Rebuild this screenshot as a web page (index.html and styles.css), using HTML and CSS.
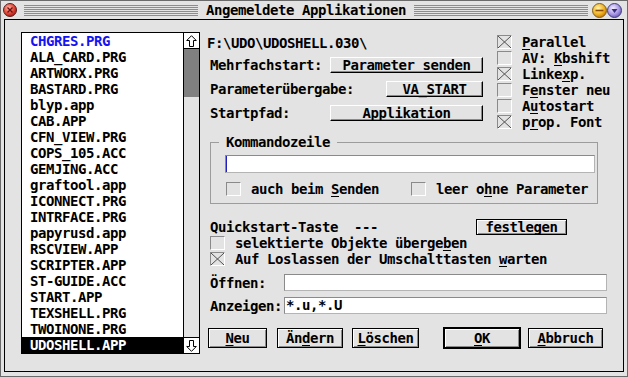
FILE: index.html
```html
<!DOCTYPE html>
<html lang="de">
<head>
<meta charset="utf-8">
<title>Angemeldete Applikationen</title>
<link rel="stylesheet" href="styles.css">
</head>
<body>
<div class="window">
  <div class="titlebar">
    <svg class="tb-close" width="14" height="14" viewBox="0 0 14 14">
      <defs><radialGradient id="gr" cx="0.4" cy="0.35" r="0.7"><stop offset="0" stop-color="#ffb8a8"/><stop offset="0.6" stop-color="#e04434"/><stop offset="1" stop-color="#a01414"/></radialGradient></defs>
      <circle cx="7" cy="7" r="6.5" fill="url(#gr)" stroke="#5a2020"/>
      <path d="M4.5 4.5L9.5 9.5M9.5 4.5L4.5 9.5" stroke="#6a1010" stroke-width="1.4"/>
    </svg>
    <div class="stripes s1"></div>
    <div class="title">Angemeldete Applikationen</div>
    <div class="stripes s2"></div>
    <svg class="tb-min" width="15" height="15" viewBox="0 0 15 15">
      <defs><radialGradient id="gy" cx="0.4" cy="0.35" r="0.7"><stop offset="0" stop-color="#fff6b0"/><stop offset="0.6" stop-color="#f2b222"/><stop offset="1" stop-color="#c07000"/></radialGradient></defs>
      <circle cx="7.5" cy="7.5" r="7" fill="url(#gy)" stroke="#806020"/>
      <path d="M3.5 7.5H11.5" stroke="#8a4a00" stroke-width="1.6"/>
    </svg>
    <svg class="tb-max" width="15" height="15" viewBox="0 0 15 15">
      <defs><radialGradient id="gp" cx="0.4" cy="0.35" r="0.7"><stop offset="0" stop-color="#f4eeff"/><stop offset="0.6" stop-color="#a898e4"/><stop offset="1" stop-color="#6454b4"/></radialGradient></defs>
      <circle cx="7.5" cy="7.5" r="7" fill="url(#gp)" stroke="#404078"/>
      <path d="M4.5 6H10.5L7.5 10Z" fill="#3a2c80"/>
    </svg>
  </div>
  <div class="content">
    <div class="listbox">
      <div class="items">
        <div class="item blue">CHGRES.PRG</div>
        <div class="item">ALA_CARD.PRG</div>
        <div class="item">ARTWORX.PRG</div>
        <div class="item">BASTARD.PRG</div>
        <div class="item">blyp.app</div>
        <div class="item">CAB.APP</div>
        <div class="item">CFN_VIEW.PRG</div>
        <div class="item">COPS_105.ACC</div>
        <div class="item">GEMJING.ACC</div>
        <div class="item">graftool.app</div>
        <div class="item">ICONNECT.PRG</div>
        <div class="item">INTRFACE.PRG</div>
        <div class="item">papyrusd.app</div>
        <div class="item">RSCVIEW.APP</div>
        <div class="item">SCRIPTER.APP</div>
        <div class="item">ST-GUIDE.ACC</div>
        <div class="item">START.APP</div>
        <div class="item">TEXSHELL.PRG</div>
        <div class="item">TWOINONE.PRG</div>
        <div class="item sel">UDOSHELL.APP</div>
      </div>
      <div class="scrollbar">
        <div class="arrow up"><svg width="11" height="12" viewBox="0 0 11 12"><path d="M5.5 0.7L10.3 5.5H7.5V11.5H3.5V5.5H0.7Z" fill="none" stroke="#000"/></svg></div>
        <div class="track"><div class="thumb"></div></div>
        <div class="arrow down"><svg width="11" height="12" viewBox="0 0 11 12"><path d="M5.5 11.3L10.3 6.5H7.5V0.5H3.5V6.5H0.7Z" fill="none" stroke="#000"/></svg></div>
      </div>
    </div>
    <div class="panel">
      <div class="top">
        <div class="fields">
          <div class="path">F:\UDO\UDOSHELL.030\</div>
          <div class="frow first"><span>Mehrfachstart:</span><span class="popup w153">Parameter senden</span></div>
          <div class="frow"><span>Parameterübergabe:</span><span class="popup w97">VA_START</span></div>
          <div class="frow"><span>Startpfad:</span><span class="popup w153">Applikation</span></div>
        </div>
        <div class="checks">
          <div class="chk"><span class="box x"></span><span><u>P</u>arallel</span></div>
          <div class="chk"><span class="box"></span><span>AV: <u>K</u>bshift</span></div>
          <div class="chk"><span class="box x"></span><span>Linke<u>x</u>p.</span></div>
          <div class="chk"><span class="box"></span><span>F<u>e</u>nster neu</span></div>
          <div class="chk"><span class="box"></span><span>A<u>u</u>tostart</span></div>
          <div class="chk"><span class="box x"></span><span>p<u>r</u>op. Font</span></div>
        </div>
      </div>
      <fieldset class="group">
        <legend>Kommandozeile</legend>
        <div class="cmd"><span class="caret"></span></div>
        <div class="grow">
          <div class="chk c1"><span class="box"></span><span>auch beim <u>S</u>enden</span></div>
          <div class="chk"><span class="box"></span><span>leer o<u>h</u>ne Parameter</span></div>
        </div>
      </fieldset>
      <div class="qs">
        <div class="qs-left">
          <div class="line">Quickstart-Taste  ---</div>
          <div class="chk"><span class="box"></span><span>selektierte Objekte überge<u>b</u>en</span></div>
        </div>
        <div class="btn festlegen"><u>f</u>estlegen</div>
      </div>
      <div class="chk pad3"><span class="box x"></span><span>Auf Loslassen der Umschalttasten <u>w</u>arten</span></div>
      <div class="frow2"><span class="lbl2">Öffnen:</span><div class="field"></div></div>
      <div class="frow2 second"><span class="lbl2">Anzeigen:</span><div class="field">*.u,*.U</div></div>
      <div class="buttons">
        <div class="btn bb b-neu"><u>N</u>eu</div>
        <div class="btn bb b-aendern">Än<u>d</u>ern</div>
        <div class="btn bb b-loeschen"><u>L</u>öschen</div>
        <div class="btn ok"><u>O</u>K</div>
        <div class="btn bb b-abbruch"><u>A</u>bbruch</div>
      </div>
    </div>
  </div>
</div>
</body>
</html>
```

FILE: styles.css
```css
* { box-sizing: border-box; }
html, body { margin: 0; padding: 0; }
body {
  width: 628px; height: 377px; overflow: hidden;
  background: #e3e3e3;
  font-family: "DejaVu Sans Mono", "Liberation Mono", monospace;
  font-weight: bold; font-size: 14px; letter-spacing: -0.43px;
  line-height: 16px; color: #000;
}
u { text-decoration: underline; text-decoration-thickness: 1px; text-underline-offset: 2px; }

.window {
  width: 628px; height: 377px;
  border: 1px solid #6a6a6a; background: #e3e3e3;
  display: flex; flex-direction: column;
}
.titlebar { height: 18px; flex: none; display: flex; align-items: center; }
.tb-close { margin-left: 2px; flex: none; }
.stripes { height: 11px; flex: none; background: repeating-linear-gradient(to bottom, #8c8c8c 0 1px, transparent 1px 2px); }
.s1 { width: 174px; margin-left: 7px; }
.s2 { width: 174px; }
.title { width: 216px; flex: none; text-align: center; white-space: pre; }
.tb-min { margin-left: 4px; flex: none; }
.tb-max { flex: none; }

.content {
  flex: 1; margin: 0 3px 4px 3px; border: 1px solid #000;
  display: flex; align-items: flex-start;
}

.listbox {
  margin: 12px 0 0 16px; width: 179px; height: 322px; flex: none;
  border: 1px solid #000; background: #fff; display: flex;
}
.items { width: 161px; }
.item { height: 16px; padding-left: 8px; white-space: pre; }
.item.blue { color: #1414f0; }
.item.sel { background: #000; color: #fff; }
.scrollbar { width: 16px; border-left: 1px solid #000; display: flex; flex-direction: column; }
.arrow { height: 16px; flex: none; background: #fff; display: flex; align-items: center; justify-content: center; }
.arrow.up { border-bottom: 1px solid #000; }
.arrow.down { border-top: 1px solid #000; }
.track { flex: 1; background: #e3e3e3; }
.thumb { height: 48px; background: #808080; }

.panel { flex: 1; margin-left: 7px; padding-top: 13px; }
.top { display: flex; }
.fields { width: 276px; }
.path { margin-top: 2px; white-space: pre; }
.frow { display: flex; align-items: center; height: 16px; margin-top: 8px; padding-left: 3px; white-space: pre; }
.frow.first { margin-top: 6px; }
.popup {
  margin-left: auto; height: 16px; line-height: 14px; text-align: center;
  background: #e3e3e3;
  border-top: 1px solid #fff; border-left: 1px solid #fff;
  border-right: 1px solid #000; border-bottom: 1px solid #000;
  box-shadow: inset -1px -1px 0 #8a8a8a;
}
.w153 { width: 153px; }
.w97 { width: 97px; }

.checks { margin-left: 14px; padding-top: 1px; }
.chk { display: flex; align-items: center; height: 16px; white-space: pre; }
.box {
  width: 15px; height: 14px; margin-right: 10px; flex: none;
  border-top: 1px solid #8a8a8a; border-left: 1px solid #8a8a8a;
  border-right: 1px solid #fff; border-bottom: 1px solid #fff;
}
.box.x {
  background:
    linear-gradient(to top right, transparent calc(50% - 0.7px), #4a4a4a 50%, transparent calc(50% + 0.7px)),
    linear-gradient(to bottom right, transparent calc(50% - 0.7px), #4a4a4a 50%, transparent calc(50% + 0.7px));
}

.group {
  margin: 4px 0 0 3px; width: 388px; padding: 5px 0 6px 0;
  border: 1px solid #9c9c9c; min-width: 0;
}
.group legend { margin-left: 8px; padding: 0 7px; line-height: 16px; }
.cmd {
  margin-left: 14px; width: 370px; height: 18px; background: #fff;
  border: 1px solid #b4b4b4; border-top-color: #8a8a8a; border-left-color: #8a8a8a;
}
.caret { display: block; width: 1px; height: 100%; background: #2020c0; }
.grow { display: flex; margin-top: 8px; padding-left: 15px; }
.grow .c1 { width: 185px; }

.qs { display: flex; margin-top: 15px; padding-left: 3px; }
.qs-left { width: 266px; }
.line { height: 16px; white-space: pre; }
.btn {
  height: 16px; line-height: 14px; text-align: center; white-space: pre;
  background: #e3e3e3; border: 1px solid #000;
  box-shadow: inset 1px 1px 0 #fff, inset -1px -1px 0 #8a8a8a;
}
.festlegen { width: 91px; flex: none; }
.pad3 { padding-left: 3px; }

.frow2 { display: flex; align-items: center; padding-left: 3px; margin-top: 7px; }
.frow2.second { margin-top: 6px; }
.lbl2 { width: 74px; white-space: pre; }
.field {
  width: 323px; height: 17px; background: #fff; padding-left: 1px;
  line-height: 15px; white-space: pre;
  border: 1px solid #b4b4b4; border-top-color: #8a8a8a; border-left-color: #8a8a8a;
}

.buttons { display: flex; align-items: center; height: 22px; margin-top: 13px; }
.bb { height: 20px; line-height: 18px; }
.ok { height: 22px; line-height: 18px; border-width: 2px; width: 78px; margin-left: 24px; }
.b-neu { width: 59px; margin-left: 1px; }
.b-aendern { width: 66px; margin-left: 10px; }
.b-loeschen { width: 67px; margin-left: 9px; }
.b-abbruch { width: 75px; margin-left: 7px; }
```
